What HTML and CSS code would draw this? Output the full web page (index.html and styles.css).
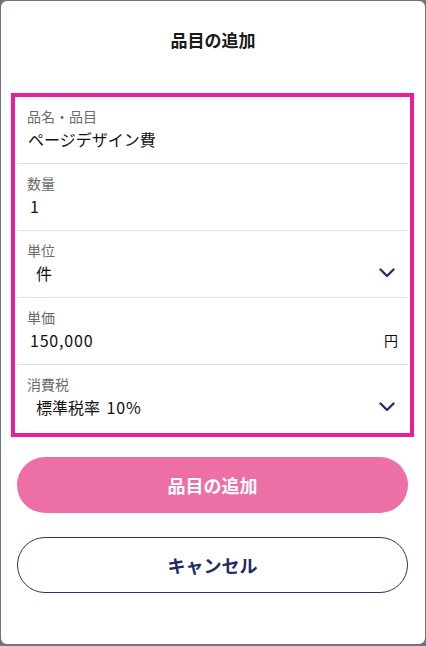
FILE: index.html
```html
<!DOCTYPE html>
<html lang="ja">
<head>
<meta charset="utf-8">
<link rel="stylesheet" href="styles.css">
</head>
<body>
<div class="modal">
  <h1 class="title">品目の追加</h1>
  <div class="form">
    <div class="row">
      <div class="label">品名・品目</div>
      <div class="value">ページデザイン費</div>
    </div>
    <div class="row">
      <div class="label">数量</div>
      <div class="value num"><span class="digits">1</span></div>
    </div>
    <div class="row">
      <div class="label">単位</div>
      <div class="value select"><span>件</span>
        <svg class="chev" width="16" height="10" viewBox="0 0 16 10"><path d="M1.5 1.5 L8 8 L14.5 1.5" fill="none" stroke="#2b2f6b" stroke-width="2.4" stroke-linecap="round" stroke-linejoin="round"/></svg>
      </div>
    </div>
    <div class="row">
      <div class="label">単価</div>
      <div class="value num price"><span class="digits">150,000</span><span class="unit">円</span></div>
    </div>
    <div class="row last">
      <div class="label">消費税</div>
      <div class="value select"><span>標準税率 <span class="digits rate">10%</span></span>
        <svg class="chev" width="16" height="10" viewBox="0 0 16 10"><path d="M1.5 1.5 L8 8 L14.5 1.5" fill="none" stroke="#2b2f6b" stroke-width="2.4" stroke-linecap="round" stroke-linejoin="round"/></svg>
      </div>
    </div>
  </div>
  <div class="actions">
    <button class="btn primary">品目の追加</button>
    <button class="btn secondary">キャンセル</button>
  </div>
</div>
</body>
</html>
```
FILE: styles.css
```css
* { box-sizing: border-box; }
html, body { margin: 0; padding: 0; }
body {
  background: #6f7480;
  width: 426px;
  height: 646px;
  padding: 1px 1px 2px 1px;
  font-family: "Noto Sans CJK JP", "Noto Sans", sans-serif;
}
.modal {
  background: #fff;
  border-radius: 6px;
  height: 643px;
  padding-top: 27px;
}
.title {
  margin: 0;
  font-size: 17px;
  line-height: 24px;
  font-weight: 700;
  text-align: center;
  color: #1a1a1a;
  margin-bottom: 41px;
}
.form {
  margin: 0 11px 0 10px;
  border: 4px solid #e81e9e;
  padding: 0 2px;
}
.row {
  height: 67px;
  border-bottom: 1px solid #e0e0e0;
  padding: 10px 10px 0 10px;
}
.row.last { border-bottom: none; height: 68px; }
.label {
  font-size: 14px;
  line-height: 18px;
  color: #6b6b6b;
}
.value {
  margin-top: 3px;
  font-size: 16px;
  line-height: 22px;
  color: #111;
  padding-left: 1px;
}
.digits { letter-spacing: 0.8px; }
.rate { margin-left: 3px; }
.value.num { padding-left: 3px; }
.value.select {
  display: flex;
  justify-content: space-between;
  align-items: center;
  padding-left: 9px;
  padding-right: 3px;
}
.chev { display: block; }
.value.price {
  display: flex;
  justify-content: space-between;
}
.unit { font-size: 14px; }
.actions {
  padding: 20px 17px 0 16px;
  display: flex;
  flex-direction: column;
  gap: 24px;
}
.btn {
  height: 56px;
  border-radius: 28px;
  font-family: "Noto Sans CJK JP", "Noto Sans", sans-serif;
  font-size: 18px;
  font-weight: 700;
  width: 100%;
}
.btn.primary {
  background: #ec6fa5;
  color: #fff;
  border: none;
}
.btn.secondary {
  background: #fff;
  color: #222a63;
  border: 1px solid #2b2f6b;
}
```
